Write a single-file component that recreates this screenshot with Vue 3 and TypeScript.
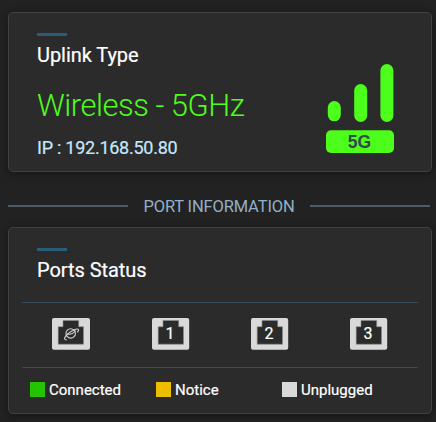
<script setup lang="ts">
interface Port {
  id: string
  label: string
}

interface LegendItem {
  name: string
  tone: string
}

const ports: Port[] = [
  { id: 'wan', label: '' },
  { id: 'lan1', label: '1' },
  { id: 'lan2', label: '2' },
  { id: 'lan3', label: '3' },
]

const legend: LegendItem[] = [
  { name: 'Connected', tone: 'connected' },
  { name: 'Notice', tone: 'notice' },
  { name: 'Unplugged', tone: 'unplugged' },
]
</script>

<template>
  <main class="panel">
    <section class="card uplink">
      <div class="info">
        <h2 class="title">Uplink Type</h2>
        <div class="mode">Wireless - 5GHz</div>
        <div class="ip">IP : 192.168.50.80</div>
      </div>
      <svg class="signal" width="70" height="92" viewBox="0 0 70 92">
        <g fill="#4dfd1b">
          <rect x="2.8" y="38" width="13" height="20.3" rx="6.5" />
          <rect x="29.2" y="21" width="13" height="38" rx="6.5" />
          <rect x="55.4" y="1" width="13" height="58" rx="6.5" />
          <rect x="1" y="67.2" width="68" height="22.8" rx="5" />
        </g>
        <text class="band" x="34.5" y="85" text-anchor="middle">5G</text>
      </svg>
    </section>

    <div class="divider"><span>PORT INFORMATION</span></div>

    <section class="card status">
      <h2 class="title">Ports Status</h2>
      <div class="ports">
        <div v-for="port in ports" :key="port.id" class="cell" :class="port.id">
          <svg width="38" height="32" viewBox="0 0 38 32">
            <rect :width="port.label ? 37.2 : 38" height="31.7" rx="2" fill="#d9d9d9" />
            <path
              d="M11 2.5H26.7V8.7H31.5V26.2H6.2V8.7H11Z"
              fill="#2b2b2b"
              stroke="#8b8b8b"
              stroke-width=".6"
            />
            <text v-if="port.label" class="num" x="18" y="21.2" text-anchor="middle">{{ port.label }}</text>
            <g v-else fill="none" stroke="#d4d4d4" stroke-width="1.1" stroke-linecap="round">
              <circle cx="18.7" cy="15.4" r="4.7" />
              <path d="M14.2 21.9C11.6 21.5 12.2 18.9 15.8 15.8C20 12.2 25.8 9.8 26.5 11.6C26.8 12.5 26.3 13.3 25.5 14" />
              <path d="M15.6 15.9C18.5 17 21.4 15.3 23.4 13" />
            </g>
          </svg>
        </div>
      </div>
      <div class="legend">
        <div v-for="item in legend" :key="item.name" class="item">
          <i class="swatch" :class="item.tone"></i><span>{{ item.name }}</span>
        </div>
      </div>
    </section>
  </main>
</template>

<style>
body {
  background: #222;
}
</style>

<style scoped>
.panel {
  box-sizing: border-box;
  height: 422px;
  padding: 12px 4px 8px 8px;
  overflow: hidden;
  background: #222;
  color: #fff;
  font-family: Roboto, sans-serif;
}
.card {
  box-sizing: border-box;
  border: 1px solid #414141;
  border-radius: 5px;
  background: #2b2b2b;
  box-shadow: 0 2px 8px rgba(0, 0, 0, 0.4);
}
.uplink {
  display: flex;
  justify-content: space-between;
  height: 160px;
  padding: 20px 36px 0 28px;
}
.title {
  margin: 0;
  font-size: 20px;
  font-weight: 400;
  letter-spacing: -0.06px;
  line-height: 24px;
  -webkit-text-stroke: 0.2px;
}
.title::before {
  content: '';
  display: block;
  width: 30px;
  height: 3px;
  margin-bottom: 7px;
  background: #2a5d78;
}
.mode {
  margin-top: 19px;
  color: #4dfd1b;
  font-size: 31px;
  font-weight: 300;
  letter-spacing: -0.5px;
  line-height: 40px;
  white-space: nowrap;
}
.ip {
  margin-top: 11px;
  color: #c5e7fc;
  font-size: 18px;
  letter-spacing: -0.25px;
  line-height: 22px;
  -webkit-text-stroke: 0.2px;
}
.signal {
  margin-top: 30px;
}
.band {
  fill: #35474f;
  font: bold 17.5px 'Liberation Sans', sans-serif;
}
.divider {
  display: flex;
  align-items: center;
  justify-content: space-between;
  height: 20px;
  margin: 24px 2px 11px 0;
  color: #92b0c8;
  font-size: 16.5px;
  letter-spacing: -0.15px;
  line-height: 20px;
  white-space: nowrap;
}
.divider span {
  padding-top: 2px;
}
.divider::before,
.divider::after {
  content: '';
  width: 120px;
  height: 2px;
  background: #4d5d68;
}
.status {
  height: 187px;
  padding: 20px 13px 0;
}
.status .title {
  padding-left: 15px;
}
.ports {
  display: grid;
  grid-template-columns: repeat(4, 99px);
  box-sizing: border-box;
  height: 66px;
  margin-top: 20px;
  padding-top: 15px;
  border-top: 1px solid #3b4d5a;
  border-bottom: 1px solid #3b4d5a;
}
.cell {
  display: flex;
  justify-content: center;
}
.wan {
  padding-right: 1px;
}
.num {
  fill: #fff;
  font-size: 16px;
  stroke: #fff;
  stroke-width: 0.2px;
}
.legend {
  display: grid;
  grid-template-columns: repeat(3, 126px);
  padding: 12px 0 0 8px;
}
.item {
  display: flex;
  align-items: center;
  gap: 4px;
  height: 19px;
  font-size: 15px;
  line-height: 19px;
  -webkit-text-stroke: 0.2px;
}
.item span {
  padding-top: 1px;
}
.swatch {
  width: 15px;
  height: 15px;
}
.connected {
  background: #24c400;
}
.notice {
  background: #edbe00;
}
.unplugged {
  background: #d9d9d9;
}
</style>
